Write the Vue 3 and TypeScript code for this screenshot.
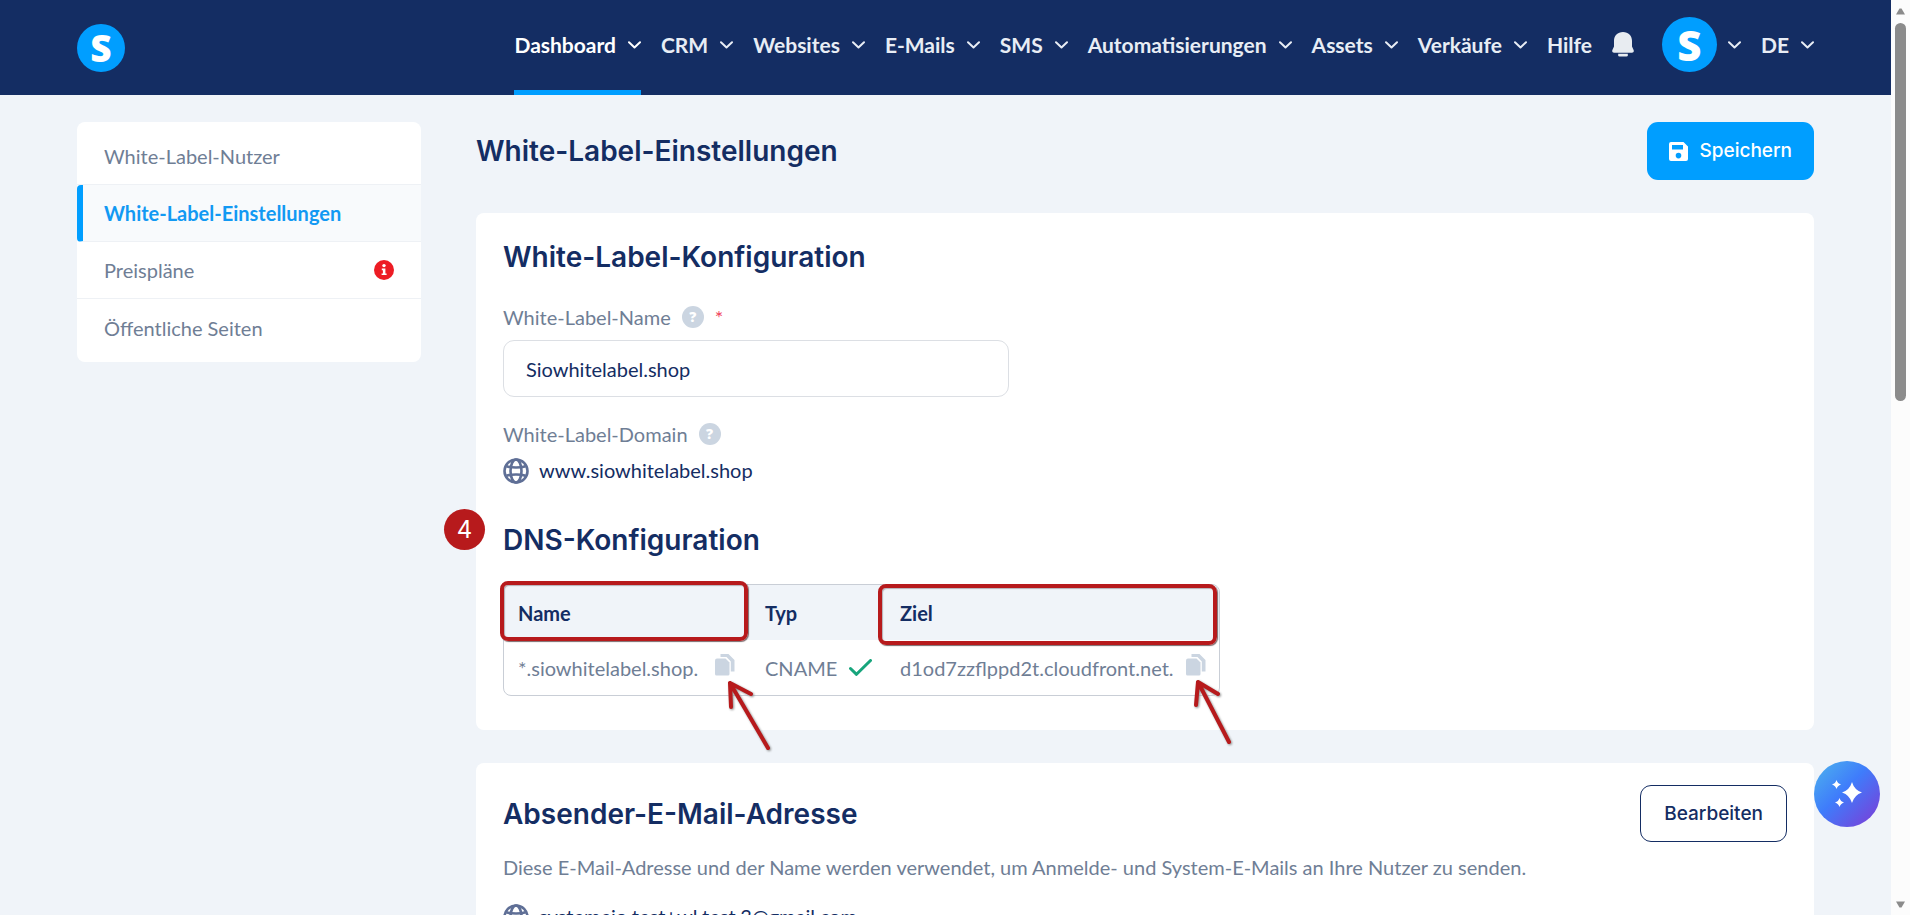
<script setup lang="ts">
import { ref } from 'vue'

interface NavItem {
  label: string
  menu: boolean
}

interface SideItem {
  label: string
  active?: boolean
  alert?: boolean
}

const navItems: NavItem[] = [
  { label: 'Dashboard', menu: true },
  { label: 'CRM', menu: true },
  { label: 'Websites', menu: true },
  { label: 'E-Mails', menu: true },
  { label: 'SMS', menu: true },
  { label: 'Automatisierungen', menu: true },
  { label: 'Assets', menu: true },
  { label: 'Verkäufe', menu: true },
  { label: 'Hilfe', menu: false },
]

const sideItems: SideItem[] = [
  { label: 'White-Label-Nutzer' },
  { label: 'White-Label-Einstellungen', active: true },
  { label: 'Preispläne', alert: true },
  { label: 'Öffentliche Seiten' },
]

const labelName = ref('Siowhitelabel.shop')
</script>

<template>
  <div class="app">
    <div class="page">
      <header class="topbar">
        <a href="#" class="brand" aria-label="Startseite">S</a>
        <nav class="nav" aria-label="Hauptnavigation">
          <a
            v-for="(item, i) in navItems"
            :key="item.label"
            href="#"
            class="nav-link"
            :class="{ current: i === 0 }"
          >
            {{ item.label }}
            <svg v-if="item.menu" class="chevron" viewBox="0 0 13 8" aria-hidden="true">
              <path d="M1 1.2 L6.5 6.4 L12 1.2" />
            </svg>
          </a>
          <button class="bell" type="button" aria-label="Benachrichtigungen">
            <svg viewBox="0 0 22 25" aria-hidden="true">
              <path d="M11 0C5.600 0 2 3.900 2 8.800V14.500L.4 18.100C-.2 19.700.7 20.800 2 20.800H20C21.300 20.800 22.200 19.700 21.600 18.100L20 14.500V8.800C20 3.900 16.400 0 11 0Z" />
              <path d="M6.200 21.800H15.800V23.200Q15.800 24.600 14.400 24.600H7.600Q6.200 24.600 6.200 23.200Z" />
            </svg>
          </button>
          <a href="#" class="account" aria-label="Konto">
            <span class="avatar">S</span>
            <svg class="chevron" viewBox="0 0 13 8" aria-hidden="true">
              <path d="M1 1.2 L6.5 6.4 L12 1.2" />
            </svg>
          </a>
          <a href="#" class="nav-link">
            DE
            <svg class="chevron" viewBox="0 0 13 8" aria-hidden="true">
              <path d="M1 1.2 L6.5 6.4 L12 1.2" />
            </svg>
          </a>
        </nav>
      </header>

      <div class="body">
        <aside class="sidebar">
          <a
            v-for="item in sideItems"
            :key="item.label"
            href="#"
            class="side-link"
            :class="{ active: item.active }"
          >
            {{ item.label }}
            <svg v-if="item.alert" class="alert" viewBox="0 0 20 20" aria-hidden="true">
              <circle cx="10" cy="10" r="10" fill="#ed1c24" />
              <circle cx="10" cy="5.600" r="1.700" fill="#fff" />
              <path d="M7.800 8.600H11.400V13.400H12.600V15H7.600V13.400H8.900V10.200H7.800Z" fill="#fff" />
            </svg>
          </a>
        </aside>

        <main class="main">
          <div class="title-row">
            <h1>White-Label-Einstellungen</h1>
            <button class="save" type="button">
              <svg viewBox="0 0 19 19" aria-hidden="true">
                <path fill-rule="evenodd" d="M2 0H14.500L19 4.500V17Q19 19 17 19H2Q0 19 0 17V2Q0 0 2 0ZM3 3V7.600H14V3ZM9.500 10.800A2.800 2.800 0 1 0 9.500 16.400A2.800 2.800 0 1 0 9.500 10.800Z" />
              </svg>
              Speichern
            </button>
          </div>

          <section class="card">
            <h2>White-Label-Konfiguration</h2>
            <div class="label-row name-label">
              <label for="wl-name">White-Label-Name</label>
              <button class="help" type="button" aria-label="Hilfe zum Namen">?</button>
              <span class="required">*</span>
            </div>
            <input id="wl-name" v-model="labelName" class="field" type="text" />
            <div class="label-row domain-label">
              <span>White-Label-Domain</span>
              <button class="help" type="button" aria-label="Hilfe zur Domain">?</button>
            </div>
            <div class="globe-row">
              <svg class="globe" viewBox="0 0 26 26" aria-hidden="true">
                <circle cx="13" cy="13" r="11.500" />
                <ellipse cx="13" cy="13" rx="5.500" ry="11.500" />
                <path d="M3.400 8.200C8 10 18 10 22.600 8.200M3.400 17.800C8 16 18 16 22.600 17.800" />
              </svg>
              www.siowhitelabel.shop
            </div>

            <div class="dns">
              <span class="step">4</span>
              <h2>DNS-Konfiguration</h2>
              <div class="table-wrap">
                <table>
                  <colgroup>
                    <col class="col-name" />
                    <col class="col-type" />
                    <col class="col-target" />
                  </colgroup>
                  <thead>
                    <tr>
                      <th scope="col">Name</th>
                      <th scope="col">Typ</th>
                      <th scope="col">Ziel</th>
                    </tr>
                  </thead>
                  <tbody>
                    <tr>
                      <td>
                        <div class="cell cell-name">
                          *.siowhitelabel.shop.
                          <button class="copy" type="button" aria-label="Name kopieren">
                            <svg viewBox="0 0 20 22" aria-hidden="true">
                              <path d="M5.500 0H13.500L19.500 6V17.500H15.800V7.500L11.500 3H5.500Z" />
                              <path d="M2 4.500H10.500L14.500 8.600V20Q14.500 21.500 13 21.500H1.500Q0 21.500 0 20V6.500Q0 4.500 2 4.500Z" />
                            </svg>
                          </button>
                        </div>
                      </td>
                      <td>
                        <div class="cell">
                          CNAME
                          <svg class="check" viewBox="0 0 23 17" role="img" aria-label="Gültig">
                            <path d="M1.500 9.500L7.500 15.300L21.500 1.500" />
                          </svg>
                        </div>
                      </td>
                      <td>
                        <div class="cell">
                          d1od7zzflppd2t.cloudfront.net.
                          <button class="copy" type="button" aria-label="Ziel kopieren">
                            <svg viewBox="0 0 20 22" aria-hidden="true">
                              <path d="M5.500 0H13.500L19.500 6V17.500H15.800V7.500L11.500 3H5.500Z" />
                              <path d="M2 4.500H10.500L14.500 8.600V20Q14.500 21.500 13 21.500H1.500Q0 21.500 0 20V6.500Q0 4.500 2 4.500Z" />
                            </svg>
                          </button>
                        </div>
                      </td>
                    </tr>
                  </tbody>
                </table>
                <span class="mark mark-name"></span>
                <span class="mark mark-target"></span>
                <svg class="arrow arrow-name" viewBox="0 0 46 74" aria-hidden="true">
                  <path d="M42 69L4 4M5 28L4 4L25 15" />
                </svg>
                <svg class="arrow arrow-target" viewBox="0 0 46 74" aria-hidden="true">
                  <path d="M36 64L5 4M3 27L5 4L25 16" />
                </svg>
              </div>
            </div>
          </section>

          <section class="card sender">
            <div class="sender-head">
              <h2>Absender-E-Mail-Adresse</h2>
              <button class="edit" type="button">Bearbeiten</button>
            </div>
            <p class="hint">
              Diese E-Mail-Adresse und der Name werden verwendet, um Anmelde- und System-E-Mails an Ihre Nutzer zu senden.
            </p>
            <div class="globe-row">
              <svg class="globe" viewBox="0 0 26 26" aria-hidden="true">
                <circle cx="13" cy="13" r="11.500" />
                <ellipse cx="13" cy="13" rx="5.500" ry="11.500" />
                <path d="M3.400 8.200C8 10 18 10 22.600 8.200M3.400 17.800C8 16 18 16 22.600 17.800" />
              </svg>
              systemeio.test+wl.test.3@gmail.com
            </div>
          </section>
        </main>
      </div>

      <button class="assistant" type="button" aria-label="Assistent">
        <svg viewBox="0 0 30 30" aria-hidden="true">
          <path d="M20 3Q22.300 11 30 13.500Q22.300 16 20 24Q17.700 16 10 13.500Q17.700 11 20 3Z" />
          <path d="M4.500 1Q5.500 4.500 9 5.500Q5.500 6.500 4.500 10Q3.500 6.500 0 5.500Q3.500 4.500 4.500 1Z" />
          <path d="M7.500 19Q8.500 22.500 12 23.500Q8.500 24.500 7.500 28Q6.500 24.500 3 23.500Q6.500 22.500 7.500 19Z" />
        </svg>
      </button>
    </div>

    <div class="scrollbar" aria-hidden="true">
      <svg viewBox="0 0 9 7"><path d="M3.500.5H5.500L9 6.500H0Z" /></svg>
      <span class="thumb"></span>
      <svg viewBox="0 0 9 7"><path d="M3.500 6.500H5.500L9 .5H0Z" /></svg>
    </div>
  </div>
</template>

<style>
html,
body {
  margin: 0;
  overflow: hidden;
}
</style>

<style scoped>
.app {
  display: grid;
  grid-template-columns: minmax(0, 1fr) 19px;
  height: 100vh;
  overflow: hidden;
  background: #f0f4f9;
  color: #142d63;
  font: 400 20px/24px Lato, "Open Sans", sans-serif;
}

*,
*::before,
*::after {
  box-sizing: border-box;
}

a {
  color: inherit;
  text-decoration: none;
}

button {
  margin: 0;
  padding: 0;
  border: 0;
  background: none;
  color: inherit;
  font: inherit;
  cursor: pointer;
}

svg {
  display: block;
  flex: none;
}

h1,
h2 {
  margin: 0;
  font: 600 28px/36px Inter, sans-serif;
}

.page {
  position: relative;
  height: 100vh;
  overflow: hidden;
}

.topbar {
  display: flex;
  align-items: center;
  justify-content: space-between;
  height: 95px;
  padding: 0 77px;
  background: #142d63;
  color: #e8edf5;
}

.brand,
.avatar {
  display: flex;
  align-items: center;
  justify-content: center;
  border-radius: 50%;
  background: #009eff;
  color: #fff;
  font-family: "Open Sans", sans-serif;
  font-weight: 800;
}

.brand {
  width: 48px;
  height: 48px;
  font-size: 37px;
  line-height: 48px;
}

.avatar {
  width: 55px;
  height: 55px;
  font-size: 42px;
  line-height: 55px;
}

.nav {
  display: flex;
  align-items: center;
  gap: 20px;
  height: 95px;
  padding-bottom: 6px;
}

.nav-link {
  display: flex;
  align-items: center;
  gap: 12px;
  height: 89px;
  font-size: 21px;
  font-weight: 700;
}

.nav-link.current {
  height: 95px;
  margin-bottom: -6px;
  border-bottom: 5px solid #009eff;
  color: #fff;
}

.chevron {
  width: 13px;
  height: 8px;
  fill: none;
  stroke: currentColor;
  stroke-width: 2;
  stroke-linecap: round;
  stroke-linejoin: round;
}

.bell svg {
  width: 22px;
  height: 25px;
  fill: #e8ecf1;
}

.account {
  display: flex;
  align-items: center;
  gap: 11px;
  margin-left: 8px;
}

.body {
  display: grid;
  grid-template-columns: 344px minmax(0, 1fr);
  gap: 55px;
  align-items: start;
  padding: 27px 77px 0;
}

.sidebar {
  padding: 6px 0;
  border-radius: 8px;
  background: #fff;
  color: #6f7e95;
}

.side-link {
  display: flex;
  align-items: center;
  justify-content: space-between;
  height: 57px;
  padding: 0 27px;
  border-bottom: 1px solid #eef1f5;
}

.side-link:last-child {
  border-bottom: 0;
}

.side-link.active {
  border-left: 6px solid #009eff;
  border-radius: 4px 0 0 4px;
  padding-left: 21px;
  background: #f8fafc;
  color: #1299f3;
  font-weight: 700;
}

.alert {
  width: 20px;
  height: 20px;
}

.title-row {
  display: flex;
  align-items: center;
  justify-content: space-between;
  margin-bottom: 33px;
}

.save,
.edit {
  display: flex;
  align-items: center;
  justify-content: center;
  border-radius: 11px;
  font: 500 19px/24px Inter, sans-serif;
}

.save {
  gap: 11px;
  height: 58px;
  padding: 0 22px;
  background: #009eff;
  color: #fff;
}

.save svg {
  width: 19px;
  height: 19px;
  fill: #fff;
}

.card {
  padding: 26px 27px 34px;
  border-radius: 8px;
  background: #fff;
}

.label-row {
  display: flex;
  align-items: center;
  gap: 11px;
  color: #6f7e95;
}

.name-label {
  margin: 30px 0 11px;
}

.domain-label {
  margin: 25px 0 12px;
}

.help {
  width: 22px;
  height: 22px;
  border-radius: 50%;
  background: #cbd5e1;
  color: #fff;
  font: 800 14px/22px "Open Sans", sans-serif;
}

.required {
  align-self: flex-start;
  color: #f0435c;
}

.field {
  display: block;
  width: 506px;
  max-width: 100%;
  height: 57px;
  padding: 0 22px;
  border: 1px solid #dcdfe4;
  border-radius: 11px;
  background: #fff;
  color: #142d63;
  font: inherit;
}

.globe-row {
  display: flex;
  align-items: flex-start;
  gap: 10px;
}

.globe {
  width: 26px;
  height: 26px;
  fill: none;
  stroke: #5f6f96;
  stroke-width: 2.600;
}

.dns {
  position: relative;
  margin-top: 38px;
}

.step {
  position: absolute;
  top: -13px;
  left: -59px;
  width: 41px;
  height: 41px;
  border-radius: 50%;
  background: #b71a1c;
  color: #fff;
  font: 400 24px/41px Inter, sans-serif;
  text-align: center;
}

.table-wrap {
  position: relative;
  width: 717px;
  margin-top: 26px;
}

table {
  width: 100%;
  overflow: hidden;
  border: 1px solid #c9ced6;
  border-radius: 8px;
  border-spacing: 0;
  table-layout: fixed;
}

.col-name {
  width: 247px;
}

.col-type {
  width: 135px;
}

th,
td {
  height: 55px;
  padding: 0 0 0 14px;
  text-align: left;
}

th {
  background: #f0f4f9;
  font-weight: 700;
}

td {
  color: #6f7e95;
}

.cell {
  display: flex;
  align-items: center;
  gap: 12px;
  white-space: nowrap;
}

.cell-name {
  gap: 17px;
}

.copy svg {
  width: 20px;
  height: 22px;
  margin-bottom: 6px;
  fill: #cbd5e1;
}

.check {
  width: 23px;
  height: 17px;
  fill: none;
  stroke: #17a57c;
  stroke-width: 3;
  stroke-linecap: round;
  stroke-linejoin: round;
}

.mark {
  position: absolute;
  border: 4px solid #b71a1c;
  border-radius: 8px;
  box-shadow: 1px 1px 1px #7a6a6c, inset 1px 1px 1px #b5b0b5;
  pointer-events: none;
}

.mark-name {
  top: -3px;
  left: -3px;
  width: 248px;
  height: 60px;
}

.mark-target {
  top: 0;
  left: 375px;
  width: 339px;
  height: 61px;
}

.arrow {
  position: absolute;
  width: 46px;
  height: 74px;
  fill: none;
  stroke: #b71a1c;
  stroke-width: 4;
  stroke-linecap: round;
  stroke-linejoin: round;
  filter: drop-shadow(1px 1px 1px #8c8c8c);
  pointer-events: none;
}

.arrow-name {
  top: 95px;
  left: 223px;
}

.arrow-target {
  top: 94px;
  left: 690px;
}

.sender {
  margin-top: 33px;
  padding-top: 22px;
}

.sender-head {
  display: flex;
  align-items: center;
  justify-content: space-between;
}

.edit {
  height: 57px;
  padding: 0 23px;
  border: 1px solid #142d63;
}

.hint {
  margin: 13px 0 25px;
  color: #6f7e95;
}

.assistant {
  position: absolute;
  right: 11px;
  bottom: 88px;
  display: flex;
  align-items: center;
  justify-content: center;
  width: 66px;
  height: 66px;
  border-radius: 50%;
  background: linear-gradient(135deg, #4aa8f0 10%, #3f7cfb 45%, #7a3fd8 95%);
}

.assistant svg {
  width: 30px;
  height: 30px;
  fill: #fff;
}

.scrollbar {
  display: flex;
  flex-direction: column;
  align-items: center;
  padding: 8px 0 7px;
  background: #fcfcfc;
}

.scrollbar svg {
  width: 9px;
  height: 7px;
  fill: #8b8b8b;
}

.thumb {
  width: 11px;
  height: 42%;
  margin: 8px 0 auto;
  border-radius: 6px;
  background: #8b8b8b;
}
</style>
